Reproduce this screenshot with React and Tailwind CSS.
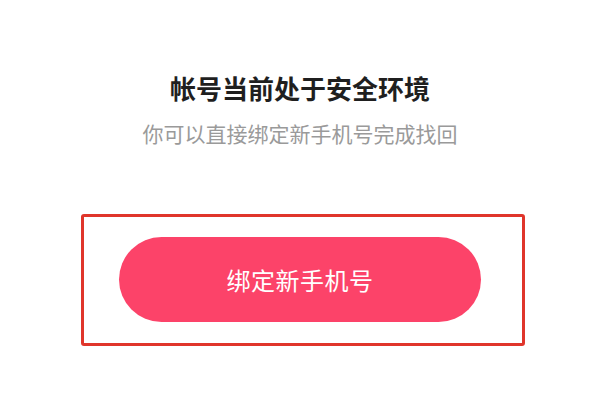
import React from "react";

const App = () => {
  return (
    <div
      className="w-[600px] h-[420px] bg-white flex flex-col"
      style={{ fontFamily: '"Noto Sans CJK SC", "Noto Sans", sans-serif' }}
    >
      <h1 className="pt-[70px] text-center text-[26px] leading-[36px] font-bold text-[#1f1f1f]">
        帐号当前处于安全环境
      </h1>
      <p className="mt-[12px] text-center text-[21px] leading-[30px] text-[#9a9a9a]">
        你可以直接绑定新手机号完成找回
      </p>
      <div className="mt-[66px] pl-[81px]">
        <div className="w-[444px] h-[132px] border-[3px] border-[#e0352b] rounded-[3px] pl-[35px] pt-[20px]">
          <button className="w-[362px] h-[85px] rounded-full bg-[#fc4369] text-white text-[24px] tracking-[0.5px]">
            绑定新手机号
          </button>
        </div>
      </div>
    </div>
  );
};

export default App;
